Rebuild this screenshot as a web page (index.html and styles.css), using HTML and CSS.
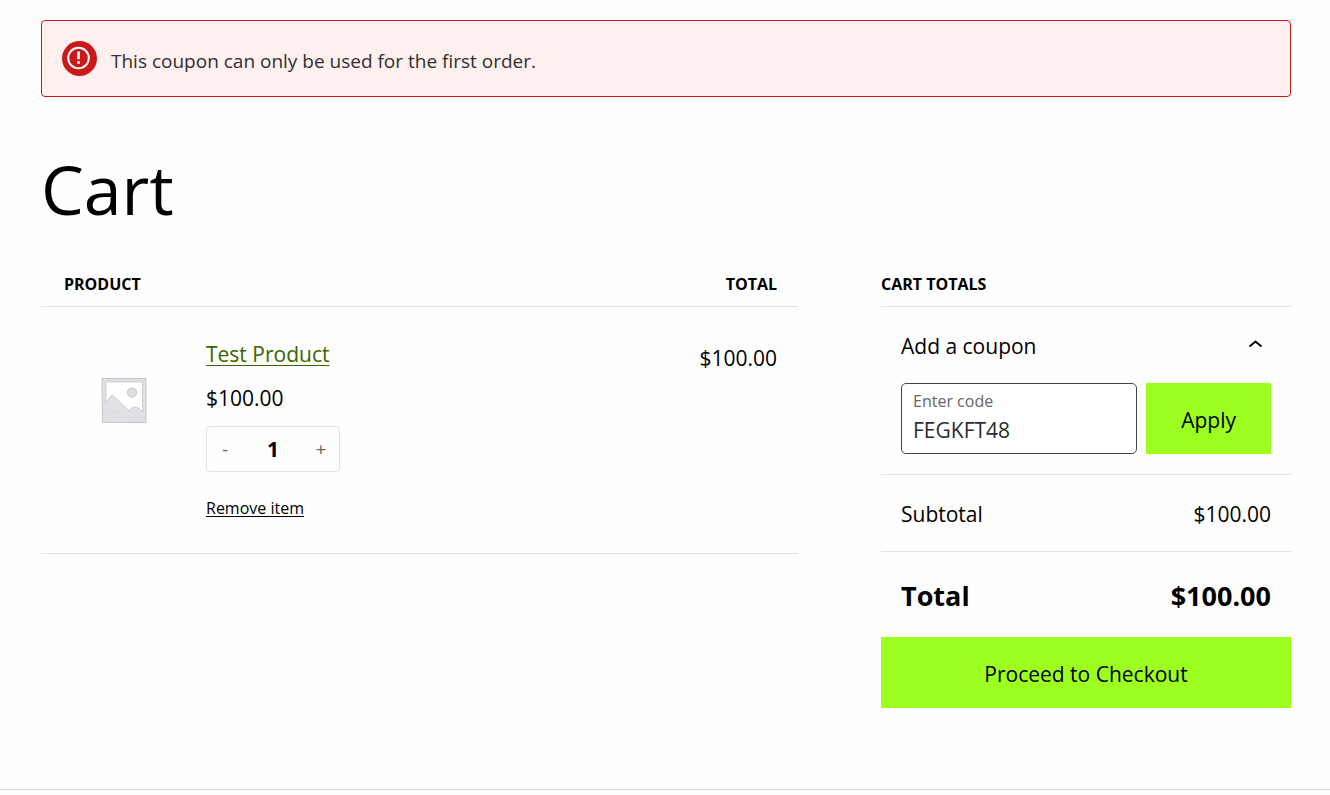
FILE: index.html
```html
<!DOCTYPE html>
<html lang="en">
<head>
  <meta charset="UTF-8" />
  <meta name="viewport" content="width=device-width, initial-scale=1.0" />
  <title>Cart</title>
  <link rel="stylesheet" href="styles.css">
</head>
<body>
  <main class="page">
    <div class="notice" role="alert">
      <svg class="notice-icon" viewBox="0 0 35 35" aria-hidden="true">
        <circle cx="17.5" cy="17.5" r="17.5" fill="#cc1818"/>
        <circle cx="16.5" cy="17" r="10.3" fill="none" stroke="#fff" stroke-width="2"/>
        <path d="M15.2 10.4h2.6v7.8h-2.6zM15.2 20.2h2.6v2.6h-2.6z" fill="#fff"/>
      </svg>
      <p>This coupon can only be used for the first order.</p>
    </div>

    <h1>Cart</h1>

    <div class="cart">
      <!-- Items -->
      <table class="items">
        <thead>
          <tr>
            <th class="head-product" colspan="2">Product</th>
            <th class="head-total">Total</th>
          </tr>
        </thead>
        <tbody>
          <tr>
            <td class="item-image">
              <svg viewBox="0 0 46 46" role="img" aria-label="Placeholder">
                <path d="M1 .5h44v44H1.500z" fill="#dfe1e5" stroke="#c3c5c9"/>
                <path d="M5 4h36.500v30l-3-3.500-4.500-1.500-3.500 1-2.500 2.500L11 17 5 24z" fill="#fff" stroke="#c3c5c9" stroke-width=".8"/>
                <circle cx="31" cy="14.5" r="4.6" fill="#dcdee2" stroke="#bfc1c5" stroke-width=".9"/>
                <path d="M8 35l6-2 4 2M16 40l6-1M29 39l5 1 5-1" fill="none" stroke="#d8dade"/>
              </svg>
            </td>
            <td class="item-product">
              <a class="item-name" href="#">Test Product</a>
              <div class="item-price">$100.00</div>
              <div class="quantity">
                <button type="button" aria-label="Reduce quantity">-</button>
                <input type="text" value="1" inputmode="numeric" aria-label="Quantity of Test Product">
                <button type="button" aria-label="Increase quantity">+</button>
              </div>
              <button class="item-remove" type="button">Remove item</button>
            </td>
            <td class="item-total">$100.00</td>
          </tr>
        </tbody>
      </table>

      <!-- Totals -->
      <section class="totals">
        <h2>Cart totals</h2>
        <div class="coupon">
          <button class="coupon-toggle" type="button" aria-expanded="true">
            Add a coupon
            <svg viewBox="0 0 30 30" aria-hidden="true">
              <path d="M8.500 15.500l6-5 6 5" fill="none" stroke="#000" stroke-width="2"/>
            </svg>
          </button>
          <form class="coupon-form">
            <div class="field">
              <label for="coupon">Enter code</label>
              <input id="coupon" type="text" value="FEGKFT48">
            </div>
            <button class="button" type="submit">Apply</button>
          </form>
        </div>
        <div class="row">
          <span>Subtotal</span>
          <span>$100.00</span>
        </div>
        <div class="row row-total">
          <span>Total</span>
          <span>$100.00</span>
        </div>
        <a class="button checkout" href="#">Proceed to Checkout</a>
      </section>
    </div>
  </main>
  <footer class="footer"></footer>
</body>
</html>
```
FILE: styles.css
```css
* {
  margin: 0;
  padding: 0;
  box-sizing: border-box;
}
body {
  background: #fefefe;
  color: #000;
  font-family: 'Open Sans', 'Noto Sans', sans-serif;
  font-size: 21px;
  line-height: 30px;
}
button, input {
  font: inherit;
  color: inherit;
  background: none;
  border: none;
}
button {
  cursor: pointer;
}
.page {
  padding: 20px 39px 0 41px;
}

.notice {
  display: flex;
  align-items: center;
  gap: 14px;
  padding: 20px;
  border: 1px solid #cc1818;
  border-radius: 4px;
  background: #fff0f0;
  color: #2f2f2f;
  font-size: 19px;
}
.notice-icon {
  width: 35px;
  height: 35px;
}
.notice p {
  padding-top: 4px;
}
h1 {
  margin: 46px 0 37px;
  font-size: 68px;
  font-weight: 400;
  line-height: 92px;
}

.cart {
  display: grid;
  grid-template-columns: minmax(0, 1fr) 410px;
  align-items: start;
  gap: 83px;
}
.items {
  width: 100%;
  border-collapse: separate;
  border-spacing: 0;
}
th, h2 {
  padding-bottom: 10px;
  border-bottom: 1px solid #e0e0e0;
  font-size: 16px;
  font-weight: 700;
  line-height: 24px;
  text-align: left;
  text-transform: uppercase;
}
td {
  padding: 32px 0 33px;
  border-bottom: 1px solid #e0e0e0;
  vertical-align: top;
}
.head-product {
  padding-left: 23px;
}
.items .head-total,
.items .item-total {
  padding-right: 21px;
  text-align: right;
}
.item-total {
  padding-top: 36px;
}
.item-image {
  width: 165px;
  padding: 71px 0 0 60px;
}
.item-image svg {
  display: block;
  width: 46px;
  height: 46px;
}
.item-name {
  display: block;
  width: fit-content;
  color: #3b6400;
  text-underline-offset: 3px;
  text-decoration-thickness: 1px;
}
.item-price {
  margin-top: 14px;
}
.quantity {
  display: flex;
  width: 134px;
  height: 46px;
  margin: 13px 0 24px;
  border: 1px solid #e0e0e0;
  border-radius: 4px;
}
.quantity button {
  width: 36px;
  color: #666;
  font-size: 19px;
}
.quantity input {
  flex: 1;
  min-width: 0;
  font-weight: 700;
  text-align: center;
}
.item-remove {
  display: block;
  font-size: 16px;
  line-height: 24px;
  text-decoration: underline;
  text-decoration-thickness: 1px;
  text-underline-offset: 2px;
}

.coupon {
  padding: 24px 20px 20px;
  border-bottom: 1px solid #e0e0e0;
}
.coupon-toggle {
  display: flex;
  justify-content: space-between;
  width: 100%;
  margin-bottom: 22px;
}
.coupon-toggle svg {
  width: 30px;
  height: 30px;
}
.coupon-form {
  display: flex;
  gap: 9px;
}
.field {
  flex: 1;
  min-width: 0;
  height: 71px;
  padding: 4px 11px;
  border: 1px solid #444;
  border-radius: 5px;
  background: #fff;
}
.field label {
  display: block;
  color: #666;
  font-size: 16px;
  line-height: 26px;
}
.field input {
  display: block;
  width: 100%;
  height: 32px;
  color: #2b2d2f;
}
.button {
  display: block;
  height: 71px;
  padding: 2px 35px 0;
  background: #9dff20;
  color: #000;
  line-height: 70px;
  text-align: center;
  text-decoration: none;
}
.row {
  display: flex;
  justify-content: space-between;
  padding: 24px 20px 22px;
  border-bottom: 1px solid #e0e0e0;
}
.row-total {
  padding: 26px 20px 23px;
  border: none;
  font-size: 27px;
  font-weight: 700;
  line-height: 36px;
}
.footer {
  margin-top: 81px;
  border-top: 1px solid #d9d9d9;
}
```
